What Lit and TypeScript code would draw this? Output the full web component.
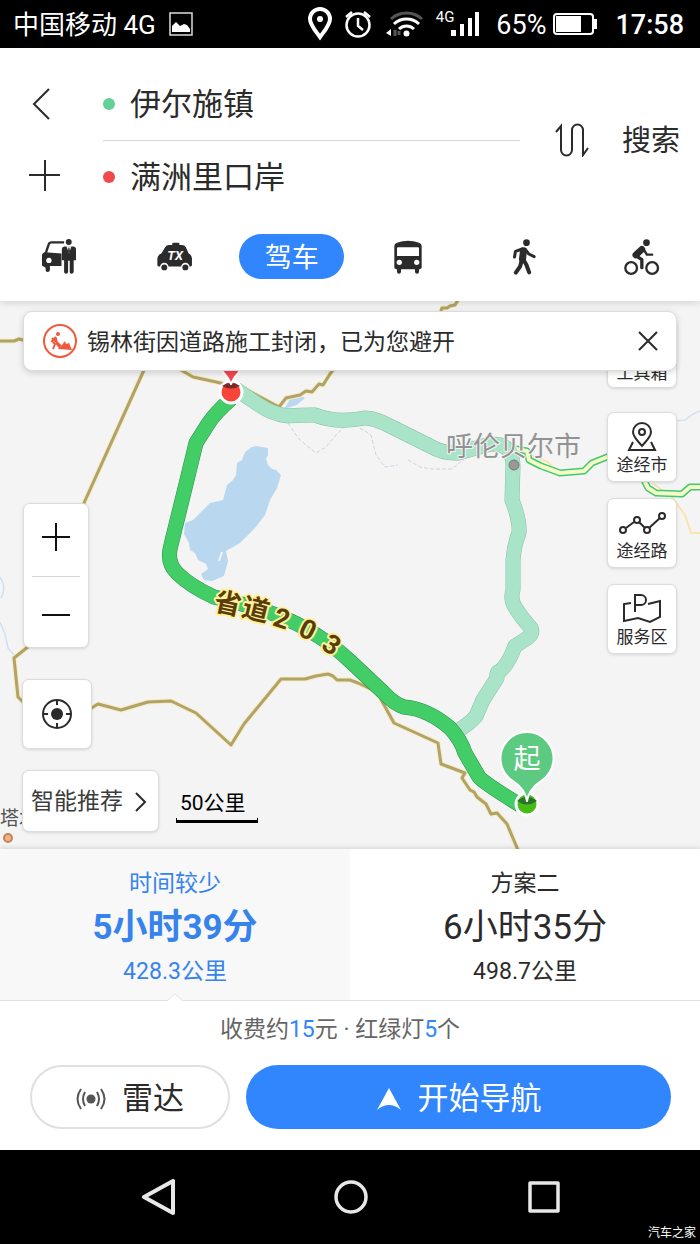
import { LitElement, html, css, svg } from "lit";
import { customElement, property, state } from "lit/decorators.js";
import { classMap } from "lit/directives/class-map.js";

const fontStack = css`Roboto, "Noto Sans CJK SC", sans-serif`;

const resetButton = css`
  * { box-sizing: border-box; }
  button {
    border: 0;
    margin: 0;
    padding: 0;
    background: none;
    color: inherit;
    font: inherit;
    cursor: pointer;
  }
  svg { display: block; flex: none; }
`;

@customElement("status-bar")
class StatusBar extends LitElement {
  static styles = css`
    :host {
      display: flex;
      align-items: center;
      height: 48px;
      padding: 0 16px 0 13px;
      background: #000;
      color: #fff;
      font: 26px/48px ${fontStack};
    }
    svg { display: block; flex: none; }
    span { padding-top: 2px; }
    .picture { margin-left: 13px; }
    .right { display: flex; align-items: center; margin-left: auto; }
    .clock { margin-left: 12px; }
    .wifi { margin-left: 14px; }
    .bars { margin-left: -3px; }
    .percent { margin: 0 7px 0 17px; font-size: 27px; }
    .time { margin-left: 18px; font-size: 27px; font-weight: 500; }
    .net { align-self: flex-start; margin-left: 12px; padding-top: 10px; font-size: 15px; line-height: 16px; }
  `;
  render() {
    return html`
      <span>中国移动 4G</span>
      <svg class="picture" width="24" height="24" viewBox="0 0 24 24" fill="none" stroke="#ddd" stroke-width="1.5">
        <rect x="1" y="1" width="22" height="22" />
        <path d="M3 20v-6l4-4 4 4 4-2 3 1 3 4v3z" fill="#fff" stroke="none" />
      </svg>
      <div class="right">
        <svg width="24" height="34" viewBox="0 0 24 34" fill="none" stroke="#fff" stroke-width="4">
          <path d="M12 30C7 23 2 18 2 12a10 10 0 0 1 20 0c0 6-5 11-10 18z" />
          <circle cx="12" cy="12" r="3" fill="#fff" stroke="none" />
        </svg>
        <svg class="clock" width="28" height="30" viewBox="0 0 28 30" fill="none" stroke="#fff" stroke-width="2.5">
          <circle cx="14" cy="16" r="11.5" />
          <path d="M14 9v8l5 4M2 8l6-5M20 3l6 5" />
        </svg>
        <svg class="wifi" width="38" height="26" viewBox="0 0 38 26" fill="none" stroke="#fff" stroke-width="3">
          <path d="M5 8a23 23 0 0 1 31 0" stroke="#555" />
          <path d="M8 13a18 18 0 0 1 25 0M13 18a11 11 0 0 1 15 0" />
          <circle cx="20.5" cy="22.5" r="3" fill="#fff" stroke="none" />
          <path d="M5 18v7l-5-3z" fill="#fff" stroke="none" />
          <path d="M9 19v6M13 20v4" stroke="#555" />
        </svg>
        <span class="net">4G</span>
        <svg class="bars" width="28" height="24" viewBox="0 0 28 24" fill="#fff">
          <path d="M0 18h5v6H0zM9 12h4v12H9zM17 6h4v18h-4zM24 0h4v24h-4z" />
        </svg>
        <span class="percent">65%</span>
        <svg width="44" height="22" viewBox="0 0 44 22">
          <rect x="1" y="1" width="39" height="20" rx="3" fill="none" stroke="#fff" stroke-width="2" />
          <rect x="3" y="3" width="25" height="16" fill="#fff" />
          <path d="M41 6h3v10h-3z" fill="#fff" />
        </svg>
        <span class="time">17:58</span>
      </div>
    `;
  }
}

const modeIcons: Record<string, unknown> = {
  driver: svg`<svg width="35" height="37" viewBox="0 0 106 110" fill="#2b2b2b">
    <path d="M70 12H32Q25 12 23 19L14 46" fill="none" stroke="#2b2b2b" stroke-width="7"/>
    <path d="M12 42L62 46V84H27V96Q26 102 20 102Q14 102 14 96V89L3 82V50Q5 43 12 42Z"/>
    <circle cx="24" cy="67" r="8" fill="#fff"/>
    <circle cx="84" cy="11" r="9"/>
    <path d="M70 25H98Q106 26 106 34V66H99V102Q98 107 92 107Q87 107 87 102V68H82V102Q81 107 76 107Q70 107 70 102V66H63V34Q63 26 70 25Z"/>
    <path d="M77 24H92L85 46Z" fill="#fff"/><path d="M83 28h3l2 12-3 6-3-6z"/>
  </svg>`,
  taxi: svg`<svg width="37" height="29" viewBox="0 0 110 88" fill="#2b2b2b">
    <path d="M48 9V5Q48 2 52 2H66Q70 2 70 5V9H78Q85 9 89 15L98 35Q108 40 108 50V70Q108 74 104 74H7Q3 74 3 70V50Q3 40 15 35L27 15Q31 9 38 9Z"/>
    <circle cx="24" cy="76" r="13" fill="#fff"/><circle cx="88" cy="76" r="13" fill="#fff"/>
    <circle cx="24" cy="77" r="9"/><circle cx="88" cy="77" r="9"/>
    <text x="57" y="55" text-anchor="middle" fill="#fff" font-family="Roboto" font-style="italic" font-weight="700" font-size="39">TX</text>
  </svg>`,
  bus: svg`<svg width="30" height="34" viewBox="0 0 90 102" fill="#2b2b2b">
    <path d="M4 18Q4 10 12 8Q45-3 78 8Q86 10 86 18V82Q86 88 80 88H78V95Q78 101 72 101Q66 101 66 95V88H24V95Q24 101 18 101Q12 101 12 95V88H10Q4 88 4 82Z"/>
    <path d="M15 22H75Q78 22 78 25V48H12V25Q12 22 15 22Z" fill="#fff"/>
    <circle cx="19" cy="67" r="8" fill="#fff"/><circle cx="71" cy="67" r="8" fill="#fff"/>
  </svg>`,
  walk: svg`<svg width="25" height="36" viewBox="0 0 74 108" fill="none" stroke="#2b2b2b" stroke-linecap="round" stroke-linejoin="round">
    <circle cx="43" cy="11" r="10" fill="#2b2b2b" stroke="none"/>
    <path d="M34 35L31 60" stroke-width="21"/>
    <path d="M30 30L10 37L7 54M40 32L50 45L66 53" stroke-width="9"/>
    <path d="M29 62L24 82L11 101M34 62L43 78L51 100" stroke-width="12"/>
  </svg>`,
  bike: svg`<svg width="37" height="36" viewBox="0 0 110 108" fill="none" stroke="#2b2b2b" stroke-linejoin="round" stroke-linecap="round">
    <circle cx="24" cy="87" r="17.5" stroke-width="7"/><circle cx="87" cy="87" r="17.5" stroke-width="7"/>
    <circle cx="70" cy="11" r="10" fill="#2b2b2b" stroke="none"/>
    <path d="M56 31L38 48" stroke-width="20"/>
    <path d="M38 50L56 62V86" stroke-width="10"/>
    <path d="M62 32L71 47H87" stroke-width="7"/>
  </svg>`,
};

@customElement("route-header")
class RouteHeader extends LitElement {
  static styles = [resetButton, css`
    :host {
      display: block;
      position: relative;
      z-index: 1;
      padding-top: 20px;
      background: #fff;
      box-shadow: 0 1px 8px rgba(0, 0, 0, 0.16);
      color: #2b2b2b;
      font: 31px/40px ${fontStack};
    }
    .route { display: flex; align-items: center; padding-right: 20px; }
    .side { width: 103px; display: grid; grid-auto-rows: 72px; }
    .side button { display: flex; align-items: center; padding-left: 29px; }
    .fields { flex: 1; min-width: 0; }
    .field { display: flex; align-items: center; height: 72px; gap: 15px; }
    .field + .field { border-top: 1px solid #d4d4d4; }
    .dot { width: 12px; height: 12px; border-radius: 50%; background: #62d197; }
    .dot.end { background: #ee4a4a; }
    input {
      flex: 1;
      min-width: 0;
      border: 0;
      padding: 2px 0 0;
      outline: 0;
      background: none;
      color: inherit;
      font: inherit;
    }
    .swap { margin: 0 33px 0 35px; }
    .search { padding-top: 2px; font-size: 29px; }
    .modes { display: grid; grid-template-columns: repeat(6, 1fr); height: 89px; align-items: center; justify-items: center; }
    .modes button { display: flex; align-items: center; justify-content: center; height: 45px; }
    .modes .active {
      width: 105px;
      padding-top: 2px;
      border-radius: 23px;
      background: #3185fd;
      color: #fff;
      font-size: 27px;
    }
  `];
  @state() mode = "drive";
  render() {
    const modes = [
      ["driver", "代驾"], ["taxi", "打车"], ["drive", "驾车"],
      ["bus", "公交"], ["walk", "步行"], ["bike", "骑行"],
    ];
    return html`
      <div class="route">
        <div class="side">
          <button aria-label="返回">
            <svg width="32" height="32" viewBox="0 0 32 32" fill="none" stroke="#2b2b2b" stroke-width="2"><path d="M20 1L5 16l15 15" /></svg>
          </button>
          <button aria-label="添加途经点">
            <svg width="32" height="32" viewBox="0 0 32 32" stroke="#2b2b2b" stroke-width="2"><path d="M0 15h31M16 0v31" /></svg>
          </button>
        </div>
        <div class="fields">
          <div class="field"><span class="dot"></span><input aria-label="起点" value="伊尔施镇" /></div>
          <div class="field"><span class="dot end"></span><input aria-label="终点" value="满洲里口岸" /></div>
        </div>
        <button class="swap" aria-label="交换起终点">
          <svg width="34" height="34" viewBox="0 0 34 34" fill="none" stroke="#2b2b2b" stroke-width="2">
            <path d="M1 9L6 3V27a5.5 5.5 0 0 0 11 0V7a5.500 5.500 0 0 1 11 0V32l5-7" />
          </svg>
        </button>
        <button class="search">搜索</button>
      </div>
      <div class="modes">
        ${modes.map(([id, label]) => html`
          <button class=${classMap({ active: id === "drive" })} aria-label=${label}
            aria-pressed=${id === this.mode} @click=${() => (this.mode = id)}>
            ${modeIcons[id] ?? label}
          </button>`)}
      </div>
    `;
  }
}

const borders = [
  "M0 341H14L19 339L23 340L60 350",
  "M150 357L144 370L84 503L29 646L14 658L18 697L24 703L60 722L90 709L98 704L121 710L148 702L171 701L196 713L231 745L244 724L281 679H305L316 676L328 674L333 676L337 680H350L358 683L377 692L394 723L438 743L441 764L465 773L462 778L470 790L474 792L477 797L486 804L491 814L497 813L507 824L518 850",
  "M170 364L181 370L193 377L230 385L247 390L279 407L286 398L300 395L306 391L312 392L319 384L323 385L330 374L333 370L345 366",
  "M440 314L442 308L447 308L450 306L455 305L458 300L465 296",
];
const mainRoute =
  "M231 399C222 407 213 416 208 424L196 443L187 480L171 545Q166 562 177 573Q190 586 214 597C250 606 285 614 318 636Q334 646 350 661L383 692Q394 704 404 707Q428 709 450 728Q461 740 465 753L479 777Q484 783 520 805";
const altRoute =
  "M236 389C250 399 262 408 272 412C288 419 300 414 315 415C330 421 345 422 365 418C374 418 382 422 390 426L430 446Q444 454 458 453L483 446Q502 441 509 451Q513 457 513 466L512 500Q520 520 519 533Q514 545 513 560V590Q510 599 515 607Q521 617 531 628Q534 634 526 639L515 646Q508 665 500 671Q496 672 497 678L483 700L476 716Q470 724 452 734";
const highway = "M516 449L527 451L529 460L541 466L560 473L584 471L592 463L612 455L640 460L645 482L648 488L656 493L682 494L690 487L704 487";
const roadLabel: [string, number, number, number][] = [
  ["省", 228, 603, 12], ["道", 256, 609, 14], ["2", 282, 618, 18], ["0", 308, 629, 26], ["3", 332, 644, 34],
];

@customElement("route-map")
class RouteMap extends LitElement {
  static styles = [resetButton, css`
    :host {
      display: grid;
      position: relative;
      min-height: 520px;
      overflow: hidden;
      background: #f4f4f4;
      color: #2b2b2b;
      font: 23px/32px ${fontStack};
    }
    .canvas { position: absolute; inset: 0; width: 100%; height: 100%; }
    .controls, .notice { grid-area: 1 / 1; position: relative; }
    .controls { display: flex; justify-content: space-between; padding: 17px 23px 17px 22px; }
    .left { display: flex; flex-direction: column; align-items: flex-start; justify-content: flex-end; }
    .card {
      background: #fff;
      border: 1px solid #dcdcdc;
      border-radius: 7px;
      box-shadow: 0 1px 3px rgba(0, 0, 0, 0.12);
    }
    .zoom { display: grid; grid-template-rows: 1fr 1fr; width: 66px; height: 145px; margin: 0 0 31px 1px; padding: 0 8px; }
    .zoom button { display: grid; place-items: center; }
    .zoom button + button { border-top: 1px solid #d4d4d4; }
    .locate { display: grid; place-items: center; width: 70px; height: 70px; margin-bottom: 21px; }
    .bottom { display: flex; align-items: flex-end; gap: 17px; }
    .smart { display: flex; align-items: center; gap: 12px; height: 62px; padding: 2px 11px 0 8px; color: #3c3c3c; }
    .scale { margin-bottom: 9px; }
    .scale span { display: block; padding: 0 12px 0 4px; color: #000; font-size: 21px; line-height: 30px; }
    .scale i { display: block; height: 5px; border: 1px solid #000; border-width: 0 1px 3px; }
    .right { display: flex; flex-direction: column; gap: 16px; }
    .right button {
      display: flex;
      flex-direction: column;
      align-items: center;
      justify-content: flex-end;
      width: 70px;
      height: 70px;
      padding-bottom: 3px;
      font-size: 17px;
      line-height: 26px;
    }
    .right button:first-child { margin-bottom: 8px; padding-bottom: 1px; }
    .notice {
      display: flex;
      align-items: center;
      align-self: start;
      height: 60px;
      margin: 10px 23px 0;
      padding: 0 18px 0 19px;
      border-radius: 9px;
      background: #fff;
      border: 1px solid #dcdcdc;
      box-shadow: 0 2px 6px rgba(0, 0, 0, 0.16);
    }
    .notice p { flex: 1; margin: 0 0 0 10px; padding-top: 3px; white-space: nowrap; }
  `];

  drawMap() {
    return html`
      <svg class="canvas" viewBox="0 301 700 548" preserveAspectRatio="xMidYMid slice" fill="none" stroke-linejoin="round" aria-hidden="true">
        <g stroke="#cfe1f2" stroke-width="1.5">
          <path d="M0 577Q7 588 1 598M0 622L5 634L8 648L14 655M676 421L685 420L693 414L700 411" />
          <path d="M288 423L298 438L306 445L316 453L326 447L335 436L344 427M360 428L371 435L376 455L385 467L398 465M408 460L420 467L432 469L452 469L464 459" stroke="#c8d4e0" stroke-dasharray="4 2" stroke-width="1" />
        </g>
        <path fill="#b9d8ef" d="M252 447L256 446L268 448V455L266 459L268 465L272 469L276 470L281 475L277 488L270 500L265 515L255 528L240 543L226 551L228 561L224 576L212 581L204 580L201 574L208 569L206 564L198 560L195 553L190 550L189 543L184 534L185 523L193 520L199 514L210 503L223 500L227 485L233 480L236 475L237 463L242 460L245 452Z" />
        <path d="M222 552L219 561" stroke="#f4f4f4" stroke-width="2" />
        <path fill="#bcd7f0" d="M284 409L290 399L301 396L305 398L297 405Z" />
        <g stroke="#f6ecc0" stroke-width="5">${borders.map((d) => svg`<path d=${d} />`)}</g>
        <g stroke="#b0a268" stroke-width="3">${borders.map((d) => svg`<path d=${d} />`)}</g>
        <path d="M530 455L548 462L552 466M652 483L672 497L685 515L691 533H704" stroke="#f8e4ae" stroke-width="2" />
        <path d=${highway} stroke="#43c872" stroke-width="7" />
        <path d=${highway} stroke="#f4fbc4" stroke-width="4" />
        <path d=${altRoute} stroke="#88bfa5" stroke-width="15" />
        <path d=${altRoute} stroke="#aae4c8" stroke-width="14" />
        <path d=${mainRoute} stroke="#2c8c4c" stroke-width="15" />
        <path d=${mainRoute} stroke="#42cd67" stroke-width="14" />
        <circle cx="514" cy="465" r="5" fill="#999" stroke="#777" />
        <g font-family='Roboto, "Noto Sans CJK SC", sans-serif' paint-order="stroke">
          <text x="446" y="456" font-size="27" fill="#929292" stroke="#f4f4f4" stroke-width="2">呼伦贝尔市</text>
          <text x="0" y="825" font-size="19" fill="#555">塔木</text>
          <g font-size="27" font-weight="700" fill="#5a3d0a" stroke="#fff19b" stroke-width="4" text-anchor="middle">
            ${roadLabel.map(([c, x, y, r]) => svg`<text x=${x} y=${y} dy="10" transform="rotate(${r} ${x} ${y})">${c}</text>`)}
          </g>
        </g>
        <circle cx="8" cy="838" r="4" fill="#eeb387" stroke="#c5835a" stroke-width="2" />
        <circle cx="231" cy="392" r="11" fill="#f8453a" stroke="#fff" stroke-width="3" />
        <path d="M222 386Q231 379 240 386Q231 391 222 386Z" fill="#7d2a2a" />
        <path d="M210 357Q217 365 223 372Q228 377 231 384Q234 377 239 372Q245 365 252 357Z" fill="#fa4450" stroke="#fff" stroke-width="2" />
        <circle cx="527" cy="804" r="11" fill="#45bd16" stroke="#fff" stroke-width="3" />
        <path d="M517 801Q527 793 537 801Q527 808 517 801Z" fill="#28752b" />
        <path d="M527 801Q525 789 513 781A26.5 26.5 0 1 1 541 781Q529 789 527 801Z" fill="#5cca80" stroke="#fff" stroke-width="2" />
        <text x="527" y="768" font-size="27" text-anchor="middle" fill="#fff" font-family='"Noto Sans CJK SC", sans-serif'>起</text>
      </svg>`;
  }

  render() {
    return html`
      ${this.drawMap()}
      <div class="controls">
        <div class="left">
          <div class="zoom card">
            <button aria-label="放大"><svg width="28" height="34" viewBox="0 0 28 34" stroke="#111" stroke-width="2"><path d="M0 14h28M14 0v28" /></svg></button>
            <button aria-label="缩小"><svg width="28" height="28" viewBox="0 0 28 28" stroke="#111" stroke-width="2"><path d="M0 17h28" /></svg></button>
          </div>
          <button class="locate card" aria-label="定位">
            <svg width="30" height="30" viewBox="0 0 30 30" fill="none" stroke="#2b2b2b" stroke-width="2">
              <circle cx="15" cy="15" r="14" /><circle cx="15" cy="15" r="6" fill="#2b2b2b" stroke="none" />
              <path d="M15 1v5M15 24v5M1 15h5M24 15h5" />
            </svg>
          </button>
          <div class="bottom">
            <button class="smart card">智能推荐
              <svg width="12" height="20" viewBox="0 0 12 20" fill="none" stroke="#2b2b2b" stroke-width="2"><path d="M1 1l9 9-9 9" /></svg>
            </button>
            <div class="scale"><span>50公里</span><i></i></div>
          </div>
        </div>
        <div class="right">
          <button class="card">工具箱</button>
          <button class="card">
            <svg width="30" height="30" viewBox="0 0 30 30" fill="none" stroke="#2b2b2b" stroke-width="2">
              <path d="M15 24C11 19 6 15 6 10a9 9 0 0 1 18 0c0 5-5 9-9 14z" /><circle cx="15" cy="10" r="3" /><path d="M6 20L2 28H28L24 20" />
            </svg>
            途经市
          </button>
          <button class="card">
            <svg width="48" height="28" viewBox="0 0 48 28" fill="none" stroke="#2b2b2b" stroke-width="2">
              <circle cx="5" cy="20" r="3" /><circle cx="19" cy="10" r="3" /><circle cx="29" cy="20" r="3" /><circle cx="44" cy="6" r="3" />
              <path d="M8 18L16 12M21 12L27 18M31 18L42 8" />
            </svg>
            途经路
          </button>
          <button class="card">
            <svg width="38" height="32" viewBox="0 0 38 32" fill="none" stroke="#2b2b2b" stroke-width="2">
              <path d="M8 11L1 12V29L15 26L27 30L37 25V9L25 12M12 20V3H18a5 5 0 0 1 0 10H12" />
            </svg>
            服务区
          </button>
        </div>
      </div>
      <div class="notice" role="status">
        <svg width="34" height="34" viewBox="0 0 34 34" fill="none" stroke="#f0593a" stroke-width="2">
          <circle cx="17" cy="17" r="16" />
          <path d="M15 25L19 21L22 17L23 20L26 19L29 26Z" fill="#f0593a" stroke="none" />
          <circle cx="15" cy="10" r="2" fill="#f0593a" stroke="none" />
          <path d="M13 13L9 17L12 20L10 25M13 14L14 20L17 24M9 14L18 22" />
        </svg>
        <p>锡林街因道路施工封闭，已为您避开</p>
        <button aria-label="关闭">
          <svg width="20" height="20" viewBox="0 0 20 20" stroke="#2b2b2b" stroke-width="2"><path d="M1 1l18 18M19 1L1 19" /></svg>
        </button>
      </div>
    `;
  }
}

@customElement("route-plan")
class RoutePlan extends LitElement {
  static styles = [resetButton, css`
    :host { display: block; }
    button {
      display: grid;
      gap: 4px;
      position: relative;
      width: 100%;
      padding: 20px 0 13px;
      border-bottom: 1px solid #e2e2e2;
      background: #fff;
      color: #2b2b2b;
      font: 23px/30px ${fontStack};
    }
    strong { font-size: 35px; line-height: 50px; font-weight: 400; }
    .active { background: #f8f8f8; color: #3683ee; }
    .active strong { font-weight: 700; }
    .notch { display: none; position: absolute; bottom: -2px; left: 50%; margin-left: -8px; }
    .active .notch { display: block; }
  `];
  @property() name = "";
  @property() time = "";
  @property() distance = "";
  @property({ type: Boolean }) active = false;
  render() {
    return html`
      <button class=${classMap({ active: this.active })} aria-pressed=${this.active}>
        <span>${this.name}</span>
        <strong>${this.time}</strong>
        <span>${this.distance}</span>
        <svg class="notch" width="16" height="9" viewBox="0 0 16 9"><path d="M0 9V8L8 1L16 8V9Z" fill="#fff" /><path d="M0 8L8 1L16 8" fill="none" stroke="#e2e2e2" /></svg>
      </button>`;
  }
}

@customElement("app-root")
class AppRoot extends LitElement {
  static styles = [resetButton, css`
    :host {
      display: flex;
      flex-direction: column;
      min-height: 100vh;
      background: #fff;
      color: #2b2b2b;
      font: 23px/30px ${fontStack};
    }
    route-map { flex: 1; }
    .panel { position: relative; box-shadow: 0 -1px 5px rgba(0, 0, 0, 0.14); background: #fff; }
    .plans { display: grid; grid-template-columns: 1fr 1fr; }
    .toll { margin: 0; padding: 14px 20px 20px 0; text-align: center; color: #666; }
    .toll b { color: #3185fd; font-weight: 400; }
    .actions { display: grid; grid-template-columns: 8fr 17fr; gap: 16px; padding: 0 29px 21px 30px; }
    .actions button {
      display: flex;
      align-items: center;
      justify-content: center;
      gap: 16px;
      height: 64px;
      padding-top: 3px;
      border-radius: 32px;
      font-size: 31px;
    }
    .radar { border: 2px solid #e0e0e0; }
    .actions .start { background: #3185fd; color: #fff; }
    .system {
      display: grid;
      grid-template-columns: repeat(3, 1fr);
      place-items: center;
      position: relative;
      height: 94px;
      padding: 0 59px 0 61px;
      background: #000;
    }
    .mark { position: absolute; right: 4px; bottom: 3px; color: #fff; font-size: 12px; line-height: 16px; }
  `];
  render() {
    return html`
      <status-bar></status-bar>
      <route-header></route-header>
      <route-map></route-map>
      <section class="panel">
        <div class="plans">
          <route-plan active name="时间较少" time="5小时39分" distance="428.3公里"></route-plan>
          <route-plan name="方案二" time="6小时35分" distance="498.7公里"></route-plan>
        </div>
        <p class="toll">收费约<b>15</b>元 · 红绿灯<b>5</b>个</p>
        <div class="actions">
          <button class="radar">
            <svg width="30" height="22" viewBox="0 0 30 22" fill="none" stroke="#555" stroke-width="2">
              <circle cx="15" cy="11" r="4.5" fill="#555" stroke="none" />
              <path d="M9 4Q5 11 9 18M21 4Q25 11 21 18M5 1Q-2 11 5 21M25 1Q32 11 25 21" />
            </svg>
            雷达
          </button>
          <button class="start">
            <svg width="26" height="24" viewBox="0 0 26 24" fill="#fff"><path d="M13 1L25 23Q19 18 13 18T1 23Z" /></svg>
            开始导航
          </button>
        </div>
      </section>
      <nav class="system">
        <button aria-label="返回"><svg width="34" height="36" viewBox="0 0 34 36" fill="none" stroke="#e8e8e8" stroke-width="4" stroke-linejoin="round"><path d="M32 2V34L3 18Z" /></svg></button>
        <button aria-label="主屏幕"><svg width="34" height="34" viewBox="0 0 34 34" fill="none" stroke="#e8e8e8" stroke-width="3.5"><circle cx="17" cy="17" r="15" /></svg></button>
        <button aria-label="最近任务"><svg width="32" height="32" viewBox="0 0 32 32" fill="none" stroke="#e8e8e8" stroke-width="3.5" stroke-linejoin="round"><path d="M2 2H30V30H2Z" /></svg></button>
        <span class="mark">汽车之家</span>
      </nav>
    `;
  }
}
